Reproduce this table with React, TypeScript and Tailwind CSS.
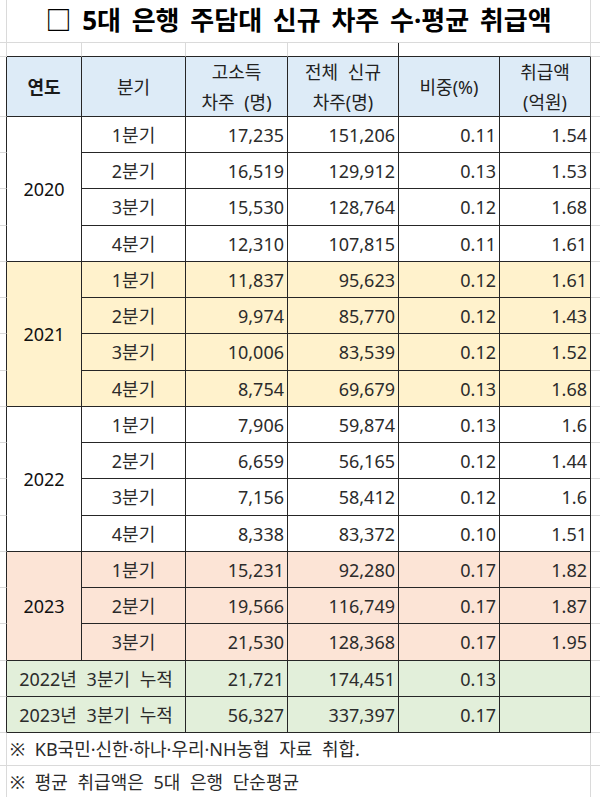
import React from "react";

type Row = [string, string, string, string, string];

const groups: { year: string; bg: string; span: string; rows: Row[] }[] = [
  {
    year: "2020",
    bg: "bg-white",
    span: "row-span-4",
    rows: [
      ["1분기", "17,235", "151,206", "0.11", "1.54"],
      ["2분기", "16,519", "129,912", "0.13", "1.53"],
      ["3분기", "15,530", "128,764", "0.12", "1.68"],
      ["4분기", "12,310", "107,815", "0.11", "1.61"],
    ],
  },
  {
    year: "2021",
    bg: "bg-[#FFF2CC]",
    span: "row-span-4",
    rows: [
      ["1분기", "11,837", "95,623", "0.12", "1.61"],
      ["2분기", "9,974", "85,770", "0.12", "1.43"],
      ["3분기", "10,006", "83,539", "0.12", "1.52"],
      ["4분기", "8,754", "69,679", "0.13", "1.68"],
    ],
  },
  {
    year: "2022",
    bg: "bg-white",
    span: "row-span-4",
    rows: [
      ["1분기", "7,906", "59,874", "0.13", "1.6"],
      ["2분기", "6,659", "56,165", "0.12", "1.44"],
      ["3분기", "7,156", "58,412", "0.12", "1.6"],
      ["4분기", "8,338", "83,372", "0.10", "1.51"],
    ],
  },
  {
    year: "2023",
    bg: "bg-[#FCE4D6]",
    span: "row-span-3",
    rows: [
      ["1분기", "15,231", "92,280", "0.17", "1.82"],
      ["2분기", "19,566", "116,749", "0.17", "1.87"],
      ["3분기", "21,530", "128,368", "0.17", "1.95"],
    ],
  },
];

const cumul: Row[] = [
  ["2022년 3분기 누적", "21,721", "174,451", "0.13", ""],
  ["2023년 3분기 누적", "56,327", "337,397", "0.17", ""],
];

const DK = "border-[#262626]";
const LT = "border-[#DADADA]";

function GutL({ dark }: { dark?: boolean }) {
  return (
    <div className={`border-b border-r ${LT} ${dark ? "border-r-[#262626]" : ""}`} />
  );
}
function GutR() {
  return <div className={`border-b ${LT}`} />;
}

function Num({ v, bg }: { v: string; bg: string }) {
  return (
    <div className={`flex items-center justify-end border-b border-r ${DK} ${bg} pr-[3px]`}>
      {v}
    </div>
  );
}

export default function App() {
  return (
    <div className="w-[600px] h-[797px] overflow-hidden bg-white font-['Noto_Sans','Noto_Sans_CJK_KR',sans-serif] text-[18px] leading-none text-[#2b2b2b] [word-spacing:5px]">
      <div className="grid grid-cols-[7px_75px_104px_102px_111px_101px_91px_9px] grid-rows-[43px_14px_60px_36px_36px_37px_36px_36px_36px_37px_36px_36px_36px_37px_36px_36px_36px_37px_36px_36px_33px_32px]">
        {/* title row */}
        <GutL />
        <div className={`col-span-6 flex items-center justify-center border-b border-r ${LT} text-[26px] font-bold text-black`}>
          <span className="pb-[2px] [word-spacing:4px]">□ 5대 은행 주담대 신규 차주 수·평균 취급액</span>
        </div>
        <GutR />

        {/* gap row */}
        <GutL />
        <div className={`border-r ${LT} border-b border-b-[#262626]`} />
        <div className={`border-r ${LT} border-b border-b-[#262626]`} />
        <div className={`border-r ${LT} border-b border-b-[#262626]`} />
        <div className={`border-r border-b ${DK}`} />
        <div className={`border-b ${DK}`} />
        <div className={`border-r ${LT} border-b border-b-[#262626]`} />
        <GutR />

        {/* header */}
        <GutL dark />
        <div className={`flex items-center justify-center border-b border-r ${DK} bg-[#DDEBF7] font-bold text-[#1a1a1a]`}>
          연도
        </div>
        <div className={`flex items-center justify-center border-b border-r ${DK} bg-[#DDEBF7] text-[#222]`}>
          분기
        </div>
        <div className={`flex flex-col items-center justify-center border-b border-r ${DK} bg-[#DDEBF7] text-[#222] leading-[30px]`}>
          <span>고소득</span>
          <span>차주 (명)</span>
        </div>
        <div className={`flex flex-col items-center justify-center border-b border-r ${DK} bg-[#DDEBF7] text-[#222] leading-[30px]`}>
          <span>전체 신규</span>
          <span>차주(명)</span>
        </div>
        <div className={`flex items-center justify-center border-b border-r ${DK} bg-[#DDEBF7] text-[#222]`}>
          비중(%)
        </div>
        <div className={`flex flex-col items-center justify-center border-b border-r ${DK} bg-[#DDEBF7] text-[#222] leading-[30px]`}>
          <span>취급액</span>
          <span>(억원)</span>
        </div>
        <GutR />

        {/* data */}
        {groups.map((g) =>
          g.rows.map((r, i) => (
            <React.Fragment key={g.year + i}>
              <GutL dark />
              {i === 0 && (
                <div className={`${g.span} flex items-center justify-center border-b border-r ${DK} ${g.bg} text-[#111]`}>
                  {g.year}
                </div>
              )}
              <div className={`flex items-center justify-center border-b border-r ${DK} ${g.bg}`}>
                {r[0]}
              </div>
              <Num v={r[1]} bg={g.bg} />
              <Num v={r[2]} bg={g.bg} />
              <Num v={r[3]} bg={g.bg} />
              <Num v={r[4]} bg={g.bg} />
              <GutR />
            </React.Fragment>
          ))
        )}

        {cumul.map((r) => (
          <React.Fragment key={r[0]}>
            <GutL dark />
            <div className={`col-span-2 flex items-center justify-center border-b border-r ${DK} bg-[#E2EFDA]`}>
              {r[0]}
            </div>
            <Num v={r[1]} bg="bg-[#E2EFDA]" />
            <Num v={r[2]} bg="bg-[#E2EFDA]" />
            <Num v={r[3]} bg="bg-[#E2EFDA]" />
            <Num v={r[4]} bg="bg-[#E2EFDA]" />
            <GutR />
          </React.Fragment>
        ))}

        {/* footer */}
        <GutL />
        <div className={`col-span-6 flex items-center border-b border-r ${LT} pl-[3px] whitespace-nowrap`}>
          ※ KB국민·신한·하나·우리·NH농협 자료 취합.
        </div>
        <GutR />
        <GutL />
        <div className={`col-span-6 flex items-center border-b border-r ${LT} pl-[3px] whitespace-nowrap`}>
          ※ 평균 취급액은 5대 은행 단순평균
        </div>
        <GutR />
      </div>
    </div>
  );
}
